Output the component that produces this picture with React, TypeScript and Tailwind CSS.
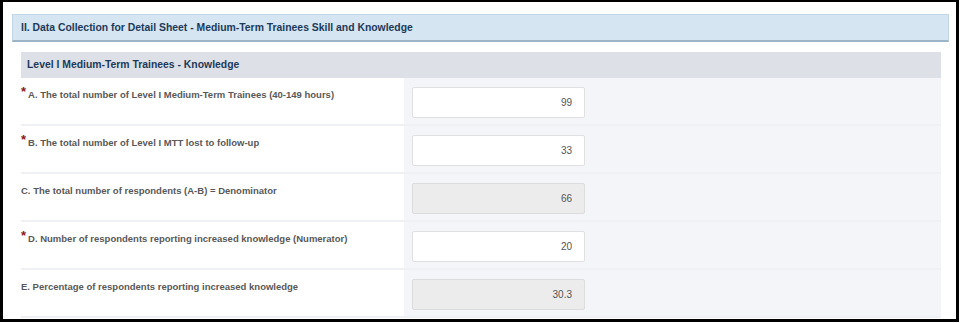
const rows = [
  { label: "A. The total number of Level I Medium-Term Trainees (40-149 hours)", value: "99", required: true, disabled: false },
  { label: "B. The total number of Level I MTT lost to follow-up", value: "33", required: true, disabled: false },
  { label: "C. The total number of respondents (A-B) = Denominator", value: "66", required: false, disabled: true },
  { label: "D. Number of respondents reporting increased knowledge (Numerator)", value: "20", required: true, disabled: false },
  { label: "E. Percentage of respondents reporting increased knowledge", value: "30.3", required: false, disabled: true },
];

export default function App() {
  return (
    <div className="h-[323px] w-[961px] bg-white font-['Liberation_Sans',Arial,sans-serif]">
      <div className="h-[322px] w-[959px] border-[3px] border-t-2 border-black bg-white pl-[9px] pr-[7px] pt-[12px]">
        <div className="flex h-[28px] items-center border border-b-2 border-[#c3d6e5] border-b-[#9db4c7] bg-[#d5e5f1] pl-[8px] text-[10.4px] font-bold text-[#1d3a5a]">
          II. Data Collection for Detail Sheet - Medium-Term Trainees Skill and Knowledge
        </div>
        <div className="ml-[9px] mr-[8px] mt-[10px]">
          <div className="flex h-[26px] items-center bg-[#dde0e7] pl-[6px] text-[10.4px] font-bold text-[#1d3a5a]">
            Level I Medium-Term Trainees - Knowledge
          </div>
          {rows.map((r) => (
            <div key={r.label} className="grid h-[48px] grid-cols-[383px_1fr] border-b-2 border-[#eef0f3]">
              <div className="flex items-start pt-[10px] text-[9.5px] font-bold text-[#595959]">
                {r.required && <span className="mr-[2px] mt-[-3px] text-[13px] leading-none text-[#8b1717]">*</span>}
                <span>{r.label}</span>
              </div>
              <div className="bg-[#f4f5f9] pl-[8px] pt-[9px]">
                <input
                  type="text"
                  readOnly
                  value={r.value}
                  disabled={r.disabled}
                  className={
                    r.disabled
                      ? "h-[31px] w-[173px] rounded-[2px] border border-[#dcdcdc] bg-[#ececec] pr-[12px] text-right text-[10px] text-[#555] outline-none"
                      : "h-[31px] w-[173px] rounded-[2px] border border-[#e0e0e0] bg-white pr-[12px] text-right text-[10px] text-[#555] outline-none"
                  }
                />
              </div>
            </div>
          ))}
        </div>
      </div>
    </div>
  );
}
